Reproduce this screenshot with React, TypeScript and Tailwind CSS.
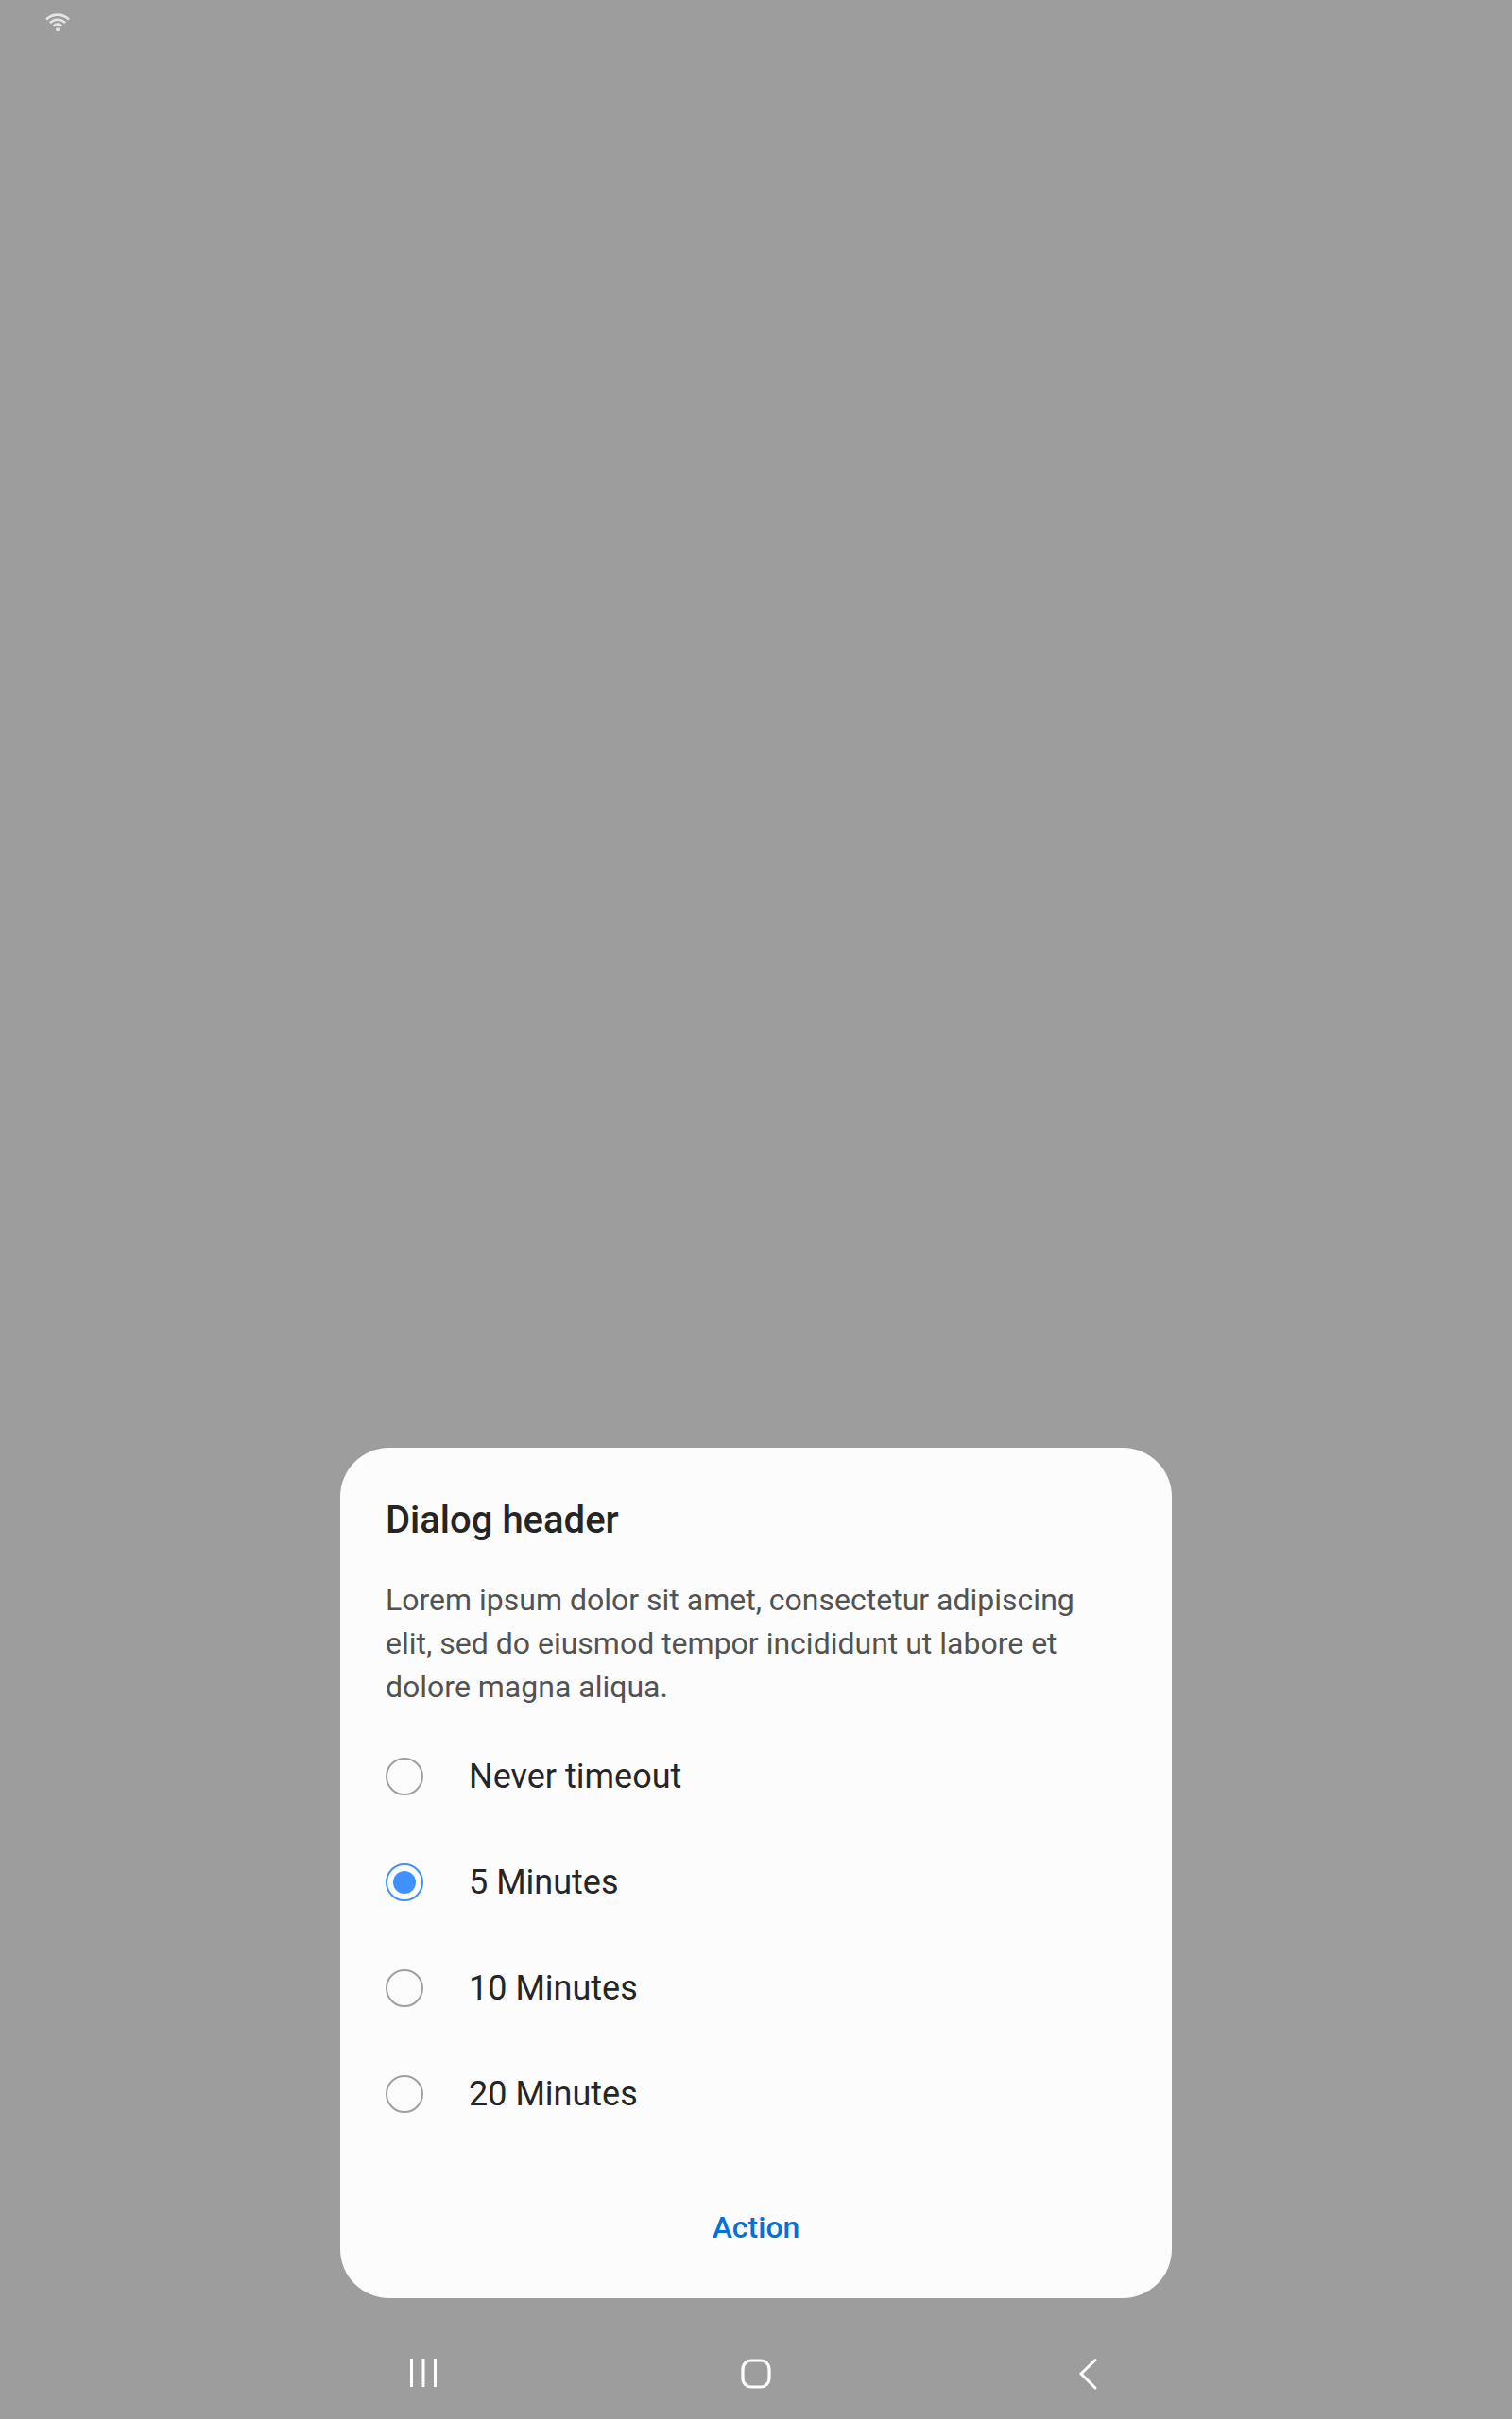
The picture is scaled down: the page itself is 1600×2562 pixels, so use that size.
import { useState } from "react";

const OPTIONS = ["Never timeout", "5 Minutes", "10 Minutes", "20 Minutes"];

function StatusBar() {
  return (
    <header className="flex h-12 items-center px-12">
      <svg width="26" height="22" viewBox="0 0 26 22" fill="none" role="img" aria-label="Wi-Fi connected">
        <g stroke="#e4e4e4" strokeWidth="2.6">
          <path d="M1 7.6C7.8 0.9 18.2 0.9 25 7.6" />
          <path d="M4.8 11.2C9.4 6.5 16.6 6.5 21.2 11.2" />
          <path d="M8.5 14.6C11 12 15 12 17.5 14.6" />
        </g>
        <circle cx="13" cy="18.3" r="2" fill="#e4e4e4" />
      </svg>
    </header>
  );
}

function TimeoutDialog() {
  const [selected, setSelected] = useState("5 Minutes");
  return (
    <section
      role="dialog"
      aria-labelledby="dialog-title"
      aria-describedby="dialog-text"
      className="mx-auto w-full max-w-[880px] rounded-[52px] bg-[#fcfcfc] px-12 pt-[53px] pb-[35px]"
    >
      <h1 id="dialog-title" className="text-[40px] leading-[48px] font-medium text-[#252525]">
        Dialog header
      </h1>
      <p id="dialog-text" className="mt-[37px] text-[32px] leading-[46px] text-[#525252]">
        Lorem ipsum dolor sit amet, consectetur adipiscing elit, sed do eiusmod tempor incididunt ut labore et dolore
        magna aliqua.
      </p>
      <div role="radiogroup" aria-labelledby="dialog-title" className="mt-4">
        {OPTIONS.map((option) => (
          <label
            key={option}
            className="flex h-28 cursor-pointer items-center gap-12 text-[36px] leading-[42px] text-[#252525]"
          >
            <input
              type="radio"
              name="timeout"
              value={option}
              checked={selected === option}
              onChange={() => setSelected(option)}
              className="grid size-10 shrink-0 appearance-none place-items-center rounded-full border-2 border-[#9f9f9f] before:size-6 before:rounded-full checked:border-[#3e91ff] checked:before:bg-[#3e91ff]"
            />
            {option}
          </label>
        ))}
      </div>
      <button
        type="button"
        className="mx-auto mt-[45px] block h-20 w-full text-[32px] leading-[48px] font-medium text-[#0072de]"
      >
        Action
      </button>
    </section>
  );
}

function NavigationBar() {
  return (
    <nav aria-label="System navigation" className="mx-auto mt-8 grid h-24 w-[66%] grid-cols-3 place-items-center">
      <button type="button" aria-label="Recent apps">
        <svg width="48" height="48" viewBox="0 0 48 48" stroke="#fff" strokeWidth="3">
          <path d="M11.5 8V38M24 8V38M36.5 8V38" />
        </svg>
      </button>
      <button type="button" aria-label="Home">
        <svg width="48" height="48" viewBox="0 0 48 48" fill="none" stroke="#fff" strokeWidth="3.2">
          <rect x="10" y="10" width="28" height="28" rx="9" />
        </svg>
      </button>
      <button type="button" aria-label="Back">
        <svg
          width="48"
          height="48"
          viewBox="0 0 48 48"
          fill="none"
          stroke="#fff"
          strokeWidth="3"
          strokeLinecap="round"
        >
          <path d="M31 9.5L16 24L31 39" />
        </svg>
      </button>
    </nav>
  );
}

export default function App() {
  return (
    <div className="flex min-h-screen flex-col border-b-2 border-white bg-[#9d9d9d] font-['Roboto',sans-serif]">
      <StatusBar />
      <main className="flex flex-1 flex-col justify-end">
        <TimeoutDialog />
      </main>
      <NavigationBar />
    </div>
  );
}
